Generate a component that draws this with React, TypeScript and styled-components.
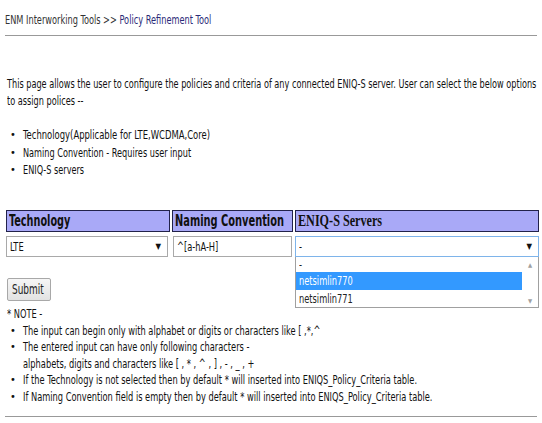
import React from "react";
import styled, { createGlobalStyle } from "styled-components";

const SANS = `"DejaVu Sans Condensed", "DejaVu Sans", "Liberation Sans", sans-serif`;
const K = 0.735;

const Global = createGlobalStyle`
  html, body { margin: 0; padding: 0; background: #fff; overflow: hidden; }
  body {
    font-family: ${SANS};
    font-size: 12.5px;
    color: #111;
  }
`;

/* The reference typeface is a very narrow one; no such face is installed,
   so text runs are horizontally condensed. */
const Squeeze = styled.div<{ $k?: number }>`
  white-space: nowrap;
  width: ${(p) => 100 / (p.$k ?? K)}%;
  transform: scaleX(${(p) => p.$k ?? K});
  transform-origin: 0 0;
`;

const InlineSqueeze = styled.span<{ $k?: number }>`
  display: inline-block;
  white-space: nowrap;
  transform: scaleX(${(p) => p.$k ?? K});
  transform-origin: 0 50%;
`;

const Page = styled.div`
  width: 542px;
  min-height: 423px;
  padding: 0 5px;
  box-sizing: border-box;
  display: flex;
  flex-direction: column;
  overflow: hidden;
  & > * {
    flex-shrink: 0;
  }
`;

const Breadcrumb = styled.div`
  padding: 12px 0 7px;
  line-height: 16px;
  color: #333;
`;

const Crumb = styled.span`
  color: #2b2b77;
`;

const Rule = styled.hr`
  margin: 0;
  border: 0;
  border-top: 1px solid #999;
  height: 0;
  width: 532px;
`;

const Intro = styled.div`
  margin: 39px 0 0 2px;
  line-height: 17px;
`;

const List = styled.ul<{ $top: number }>`
  margin: ${(p) => p.$top}px 0 0 0;
  padding: 0 0 0 18px;
  list-style: none;
`;

const Item = styled.li<{ $lh: number }>`
  position: relative;
  line-height: ${(p) => p.$lh}px;
  &::before {
    content: "•";
    position: absolute;
    left: -13px;
    top: 0;
    font-size: 11px;
  }
`;

const Grid = styled.div`
  margin-top: 31px;
  margin-left: 1px;
  display: grid;
  grid-template-columns: 164px 121px 244px;
  column-gap: 2px;
  row-gap: 4px;
`;

const Head = styled.div<{ $serif?: boolean }>`
  height: 22px;
  box-sizing: border-box;
  background: #a9a9f7;
  border: 1px solid #22224a;
  font-family: ${(p) => (p.$serif ? `"Liberation Serif", serif` : SANS)};
  font-weight: bold;
  font-size: ${(p) => (p.$serif ? 16 : 15)}px;
  line-height: 20px;
  padding-left: 2px;
  color: #111;
  overflow: hidden;
`;

const Cell = styled.div`
  position: relative;
`;

const Select = styled.div<{ $focused?: boolean; $w: number }>`
  width: ${(p) => p.$w}px;
  height: 21px;
  box-sizing: border-box;
  border: 1px solid ${(p) => (p.$focused ? "#7eb4ea" : "#a9a9a9")};
  background: #fff;
  display: flex;
  align-items: center;
  justify-content: space-between;
  padding: 0 6px 0 3px;
  overflow: hidden;
`;

const Arrow = styled.span`
  font-size: 8px;
  color: #111;
`;

const TextBox = styled.div`
  width: 119px;
  height: 21px;
  box-sizing: border-box;
  margin-left: 1px;
  border: 1px solid #a9a9a9;
  display: flex;
  align-items: center;
  padding-left: 3px;
  overflow: hidden;
`;

const Dropdown = styled.div`
  position: absolute;
  left: 0;
  top: 21px;
  width: 244px;
  height: 51px;
  box-sizing: border-box;
  border: 1px solid #a0a0a0;
  border-top: 0;
  background: #fff;
  display: flex;
  z-index: 2;
  overflow: hidden;
`;

const Options = styled.div`
  flex: 1;
  display: flex;
  flex-direction: column;
`;

const Option = styled.div<{ $active?: boolean; $h: number }>`
  height: ${(p) => p.$h}px;
  line-height: ${(p) => p.$h}px;
  padding-left: 3px;
  background: ${(p) => (p.$active ? "#3399ff" : "transparent")};
  color: ${(p) => (p.$active ? "#fff" : "#222")};
`;

const Scroll = styled.div`
  width: 16px;
  display: flex;
  flex-direction: column;
  justify-content: space-between;
  align-items: center;
  font-size: 6px;
  color: #a0a0a0;
  padding: 4px 0 3px;
`;

const Submit = styled.button`
  margin: 21px 0 0 2px;
  width: 44px;
  height: 23px;
  padding: 0 0 0 4px;
  font-family: inherit;
  font-size: 13.5px;
  color: #222;
  text-align: left;
  background: linear-gradient(#f6f6f6, #e2e2e2);
  border: 1px solid #a8a8a8;
  border-radius: 2px;
  align-self: flex-start;
  overflow: hidden;
`;

const Note = styled.div`
  margin: 5px 0 0 2px;
  line-height: 16px;
`;

const BottomRule = styled(Rule)`
  margin-top: 11px;
`;

export default function App() {
  return (
    <>
      <Global />
      <Page>
        <Breadcrumb>
          <Squeeze $k={0.73}>
            ENM Interworking Tools &gt;&gt; <Crumb>Policy Refinement Tool</Crumb>
          </Squeeze>
        </Breadcrumb>
        <Rule />
        <Intro>
          <Squeeze $k={0.725}>
            This page allows the user to configure the policies and criteria of any connected ENIQ-S server. User can
            select the below options
          </Squeeze>
          <Squeeze $k={0.725}>to assign polices --</Squeeze>
        </Intro>
        <List $top={17}>
          <Item $lh={17.5}>
            <Squeeze $k={0.75}>Technology(Applicable for LTE,WCDMA,Core)</Squeeze>
          </Item>
          <Item $lh={17.5}>
            <Squeeze $k={0.725}>Naming Convention - Requires user input</Squeeze>
          </Item>
          <Item $lh={17.5}>
            <Squeeze $k={0.725}>ENIQ-S servers</Squeeze>
          </Item>
        </List>
        <Grid>
          <Head>
            <Squeeze $k={0.72}>Technology</Squeeze>
          </Head>
          <Head>
            <Squeeze $k={0.73}>Naming Convention</Squeeze>
          </Head>
          <Head $serif>
            <Squeeze $k={0.76}>ENIQ-S Servers</Squeeze>
          </Head>
          <Cell>
            <Select $w={162}>
              <InlineSqueeze>LTE</InlineSqueeze>
              <Arrow>▼</Arrow>
            </Select>
          </Cell>
          <Cell>
            <TextBox>
              <InlineSqueeze>^[a-hA-H]</InlineSqueeze>
            </TextBox>
          </Cell>
          <Cell>
            <Select $w={244} $focused>
              <InlineSqueeze>-</InlineSqueeze>
              <Arrow>▼</Arrow>
            </Select>
            <Dropdown>
              <Options>
                <Option $h={15}>
                  <InlineSqueeze>-</InlineSqueeze>
                </Option>
                <Option $h={18} $active>
                  <InlineSqueeze>netsimlin770</InlineSqueeze>
                </Option>
                <Option $h={17}>
                  <InlineSqueeze>netsimlin771</InlineSqueeze>
                </Option>
              </Options>
              <Scroll>
                <span>▲</span>
                <span>▼</span>
              </Scroll>
            </Dropdown>
          </Cell>
        </Grid>
        <Submit>
          <InlineSqueeze>Submit</InlineSqueeze>
        </Submit>
        <Note>
          <Squeeze>* NOTE -</Squeeze>
        </Note>
        <List $top={1}>
          <Item $lh={16.5}>
            <Squeeze>The input can begin only with alphabet or digits or characters like [ ,*,^</Squeeze>
          </Item>
          <Item $lh={16.5}>
            <Squeeze>The entered input can have only following characters -</Squeeze>
            <Squeeze>alphabets, digits and characters like [ , * , ^ , ] , - , _ , +</Squeeze>
          </Item>
          <Item $lh={16.5}>
            <Squeeze>If the Technology is not selected then by default * will inserted into ENIQS_Policy_Criteria table.</Squeeze>
          </Item>
          <Item $lh={16.5}>
            <Squeeze>If Naming Convention field is empty then by default * will inserted into ENIQS_Policy_Criteria table.</Squeeze>
          </Item>
        </List>
        <BottomRule />
      </Page>
    </>
  );
}
